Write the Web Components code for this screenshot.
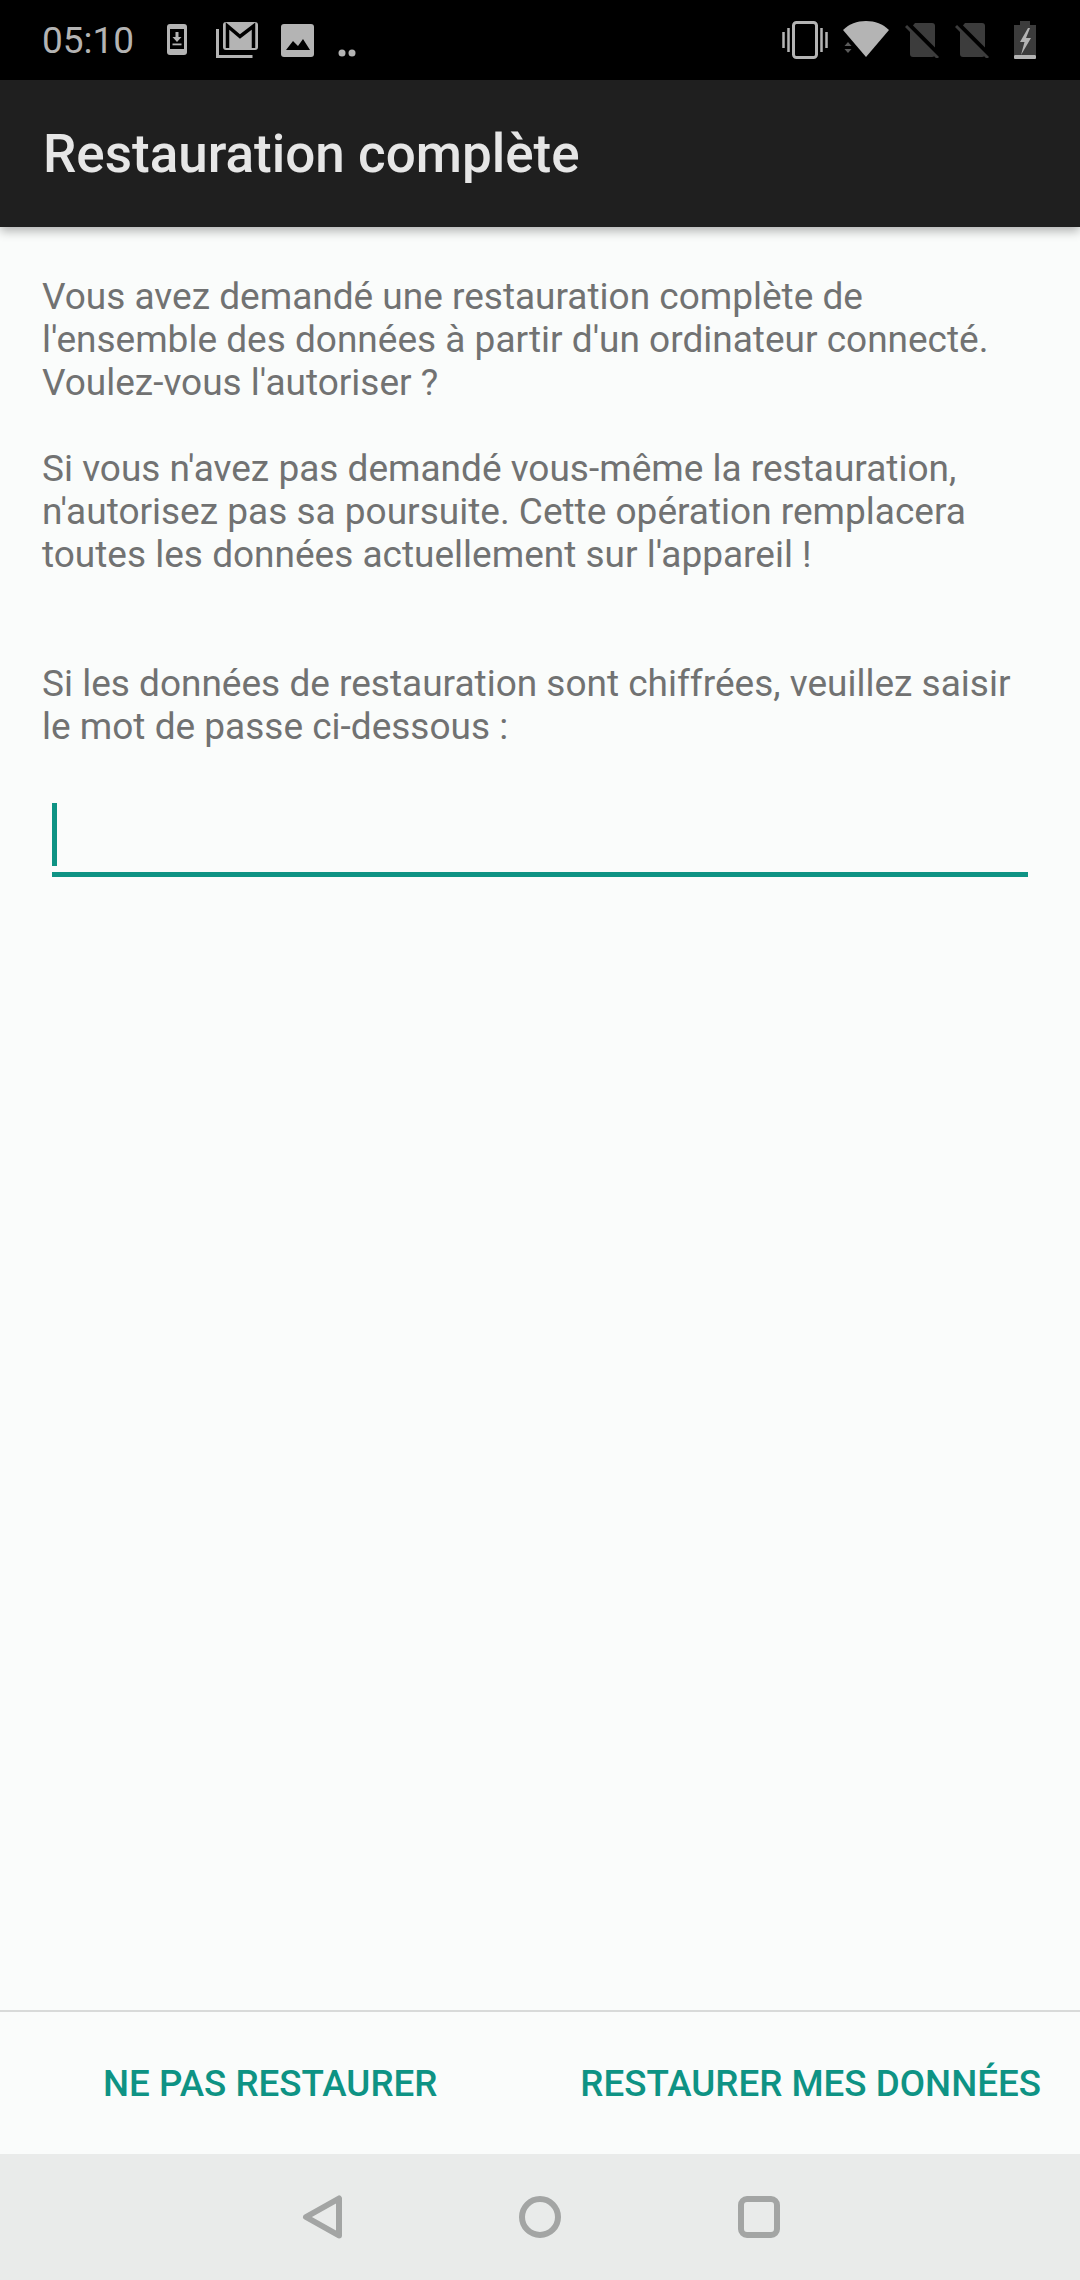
<!DOCTYPE html>
<html lang="fr">
<head>
<meta charset="utf-8">
<title>Restauration complète</title>
<style>
  html, body { margin: 0; padding: 0; }
  body { font-family: Roboto, "Liberation Sans", sans-serif; background: #fafcfb; }
  backup-screen { height: 2280px; }
</style>
</head>
<body>
<backup-screen>
  <status-bar slot="status"></status-bar>
  <app-bar slot="bar">Restauration complète</app-bar>
  <backup-message>
    <p>Vous avez demandé une restauration complète de<br>l'ensemble des données à partir d'un ordinateur connecté.<br>Voulez-vous l'autoriser ?</p>
    <p>Si vous n'avez pas demandé vous-même la restauration,<br>n'autorisez pas sa poursuite. Cette opération remplacera<br>toutes les données actuellement sur l'appareil !</p>
  </backup-message>
  <backup-message class="second">
    <p>Si les données de restauration sont chiffrées, veuillez saisir<br>le mot de passe ci-dessous :</p>
  </backup-message>
  <password-field></password-field>
  <action-row slot="actions">
    <text-button>NE PAS RESTAURER</text-button>
    <text-button>RESTAURER MES DONNÉES</text-button>
  </action-row>
  <nav-bar slot="nav"></nav-bar>
</backup-screen>

<script>
class backupScreen extends HTMLElement {
    constructor() {
        super();
        this.attachShadow({mode:'open'});
    }

    connectedCallback() {
        this.shadowRoot.innerHTML = `
            <style>
                :host { display: flex; flex-direction: column; background: #fafcfb; overflow: hidden; }
                .content { flex: 1; padding: 48px 42px 0; min-height: 0; }
            </style>
            <slot name="status"></slot>
            <slot name="bar"></slot>
            <div class="content"><slot></slot></div>
            <slot name="actions"></slot>
            <slot name="nav"></slot>
        `;
    }
}

class statusBar extends HTMLElement {
    constructor() {
        super();
        this.attachShadow({mode:'open'});
    }

    connectedCallback() {
        this.shadowRoot.innerHTML = `
            <style>
                :host { display: flex; align-items: center; height: 80px; background: #000; color: #b4b4b4; padding: 0 0 0 42px; box-sizing: border-box; }
                .time { font: 400 37px Roboto, sans-serif; width: 125px; }
                svg { display: block; flex: none; }
                .left { display: flex; align-items: center; flex: 1; }
                .right { display: flex; align-items: center; }
            </style>
            <div class="left">
                <span class="time">05:10</span>
                <svg width="20" height="32" viewBox="0 0 20 32">
                    <rect width="20" height="31" rx="3" fill="#b4b4b4"/>
                    <rect x="3" y="5" width="14" height="20" fill="#000"/>
                    <path d="M8.500 8h3v5h3l-4.500 5-4.500-5h3z" fill="#b4b4b4"/>
                    <rect x="5.500" y="19.500" width="9" height="1.800" fill="#b4b4b4"/>
                </svg>
                <svg width="42" height="36" viewBox="0 0 42 36" style="margin-left:29px">
                    <path d="M1.500 7v27.500h35" fill="none" stroke="#b4b4b4" stroke-width="3"/>
                    <rect x="7" y="0" width="35" height="28" rx="3" fill="#b4b4b4"/>
                    <path d="M11.500 26V4L24 14.500 37.500 4v22" fill="none" stroke="#000" stroke-width="3.500"/>
                </svg>
                <svg width="33" height="33" viewBox="0 0 33 33" style="margin-left:23px">
                    <rect width="33" height="33" rx="3" fill="#b4b4b4"/>
                    <path d="M5 26l7-9 5 5 5-7 7 11z" fill="#000"/>
                </svg>
                <svg width="18" height="10" viewBox="0 0 18 10" style="margin-left:24px;margin-top:26px">
                    <circle cx="4" cy="5" r="3.500" fill="#b4b4b4"/>
                    <circle cx="14" cy="5" r="3.500" fill="#b4b4b4"/>
                </svg>
            </div>
            <div class="right">
                <svg width="46" height="38" viewBox="0 0 46 38">
                    <rect x="11.500" y="1.500" width="23" height="35" rx="3" fill="none" stroke="#b4b4b4" stroke-width="3"/>
                    <path d="M1.500 11v16M6.500 7v24M39.500 7v24M44.500 11v16" stroke="#b4b4b4" stroke-width="2.500" fill="none"/>
                </svg>
                <svg width="46" height="38" viewBox="0 0 46 38" style="margin-left:15px">
                    <path d="M0 9C6 3 14 0 23 0s17 3 23 9L23 36z" fill="#b4b4b4"/>
                    <path d="M1.500 25L5 21l3.500 4zM1.500 28h7L5 32z" fill="#5a5a5a"/>
                </svg>
                <svg width="34" height="36" viewBox="0 0 34 36" style="margin-left:16px">
                    <path d="M10 1h17a3 3 0 0 1 3 3v28a3 3 0 0 1-3 3H8a3 3 0 0 1-3-3V7z" fill="#3c3c3c"/>
                    <path d="M3 2l32 32" stroke="#000" stroke-width="5"/>
                    <path d="M1 4l32 32" stroke="#3c3c3c" stroke-width="3"/>
                </svg>
                <svg width="34" height="36" viewBox="0 0 34 36" style="margin-left:16px">
                    <path d="M10 1h17a3 3 0 0 1 3 3v28a3 3 0 0 1-3 3H8a3 3 0 0 1-3-3V7z" fill="#3c3c3c"/>
                    <path d="M3 2l32 32" stroke="#000" stroke-width="5"/>
                    <path d="M1 4l32 32" stroke="#3c3c3c" stroke-width="3"/>
                </svg>
                <svg width="22" height="38" viewBox="0 0 22 38" style="margin-left:25px;margin-right:44px">
                    <rect x="6" y="0" width="10" height="5" fill="#3c3c3c"/>
                    <rect x="0" y="4" width="22" height="30" fill="#3c3c3c"/>
                    <rect x="0" y="34" width="22" height="4" rx="1" fill="#b4b4b4"/>
                    <path d="M14 7L6 21h4.500L7 34l10-17h-5l4-10z" fill="#b4b4b4"/>
                </svg>
            </div>
        `;
    }
}

class appBar extends HTMLElement {
    constructor() {
        super();
        this.attachShadow({mode:'open'});
    }

    connectedCallback() {
        this.shadowRoot.innerHTML = `
            <style>
                :host { display: flex; align-items: center; height: 147px; box-sizing: border-box; padding: 0 0 0 43px; background: #1f1f1f; color: #e6e6e6; font: 500 53px Roboto, sans-serif; box-shadow: 0 4px 10px rgba(0,0,0,.3); position: relative; z-index: 1; }
            </style>
            <slot></slot>
        `;
    }
}

class backupMessage extends HTMLElement {
    constructor() {
        super();
        this.attachShadow({mode:'open'});
    }

    connectedCallback() {
        this.shadowRoot.innerHTML = `
            <style>
                :host { display: block; color: #717272; font: 400 37px/43px Roboto, sans-serif; }
                :host(.second) { margin-top: 86px; }
                ::slotted(p) { margin: 0 0 43px; }
                ::slotted(p:last-child) { margin-bottom: 0; }
            </style>
            <slot></slot>
        `;
    }
}

class passwordField extends HTMLElement {
    constructor() {
        super();
        this.attachShadow({mode:'open'});
    }

    connectedCallback() {
        this.shadowRoot.innerHTML = `
            <style>
                :host { display: block; margin: 50px 10px 0; height: 74px; border-bottom: 5px solid #0e9384; position: relative; }
                .cursor { position: absolute; left: 0; top: 5px; width: 5px; height: 63px; background: #0e9384; }
            </style>
            <div class="cursor"></div>
        `;
    }
}

class actionRow extends HTMLElement {
    constructor() {
        super();
        this.attachShadow({mode:'open'});
    }

    connectedCallback() {
        this.shadowRoot.innerHTML = `
            <style>
                :host { display: flex; justify-content: space-between; align-items: center; height: 144px; box-sizing: border-box; border-top: 2px solid #d8dad9; padding: 0 39px 0 103px; background: #fafcfb; }
            </style>
            <slot></slot>
        `;
    }
}

class textButton extends HTMLElement {
    constructor() {
        super();
        this.attachShadow({mode:'open'});
    }

    connectedCallback() {
        this.shadowRoot.innerHTML = `
            <style>
                :host { display: block; color: #0e9384; font: 500 36.75px Roboto, sans-serif; margin-top: 1px; }
            </style>
            <slot></slot>
        `;
    }
}

class navBar extends HTMLElement {
    constructor() {
        super();
        this.attachShadow({mode:'open'});
    }

    connectedCallback() {
        this.shadowRoot.innerHTML = `
            <style>
                :host { display: flex; justify-content: center; align-items: center; gap: 177px; height: 126px; box-sizing: border-box; background: #e9ebea; }
                svg { display: block; fill: none; stroke: #a3a5a4; stroke-width: 6; }
            </style>
            <svg width="42" height="44" viewBox="0 0 42 44"><path d="M6 22L39 3.500v37z" stroke-linejoin="round"/></svg>
            <svg width="42" height="44" viewBox="0 0 42 44"><circle cx="21" cy="22" r="18"/></svg>
            <svg width="42" height="44" viewBox="0 0 42 44"><rect x="3" y="4" width="36" height="36" rx="6"/></svg>
        `;
    }
}

customElements.define("backup-screen", backupScreen);
customElements.define("status-bar", statusBar);
customElements.define("app-bar", appBar);
customElements.define("backup-message", backupMessage);
customElements.define("password-field", passwordField);
customElements.define("action-row", actionRow);
customElements.define("text-button", textButton);
customElements.define("nav-bar", navBar);
</script>
</body>
</html>
